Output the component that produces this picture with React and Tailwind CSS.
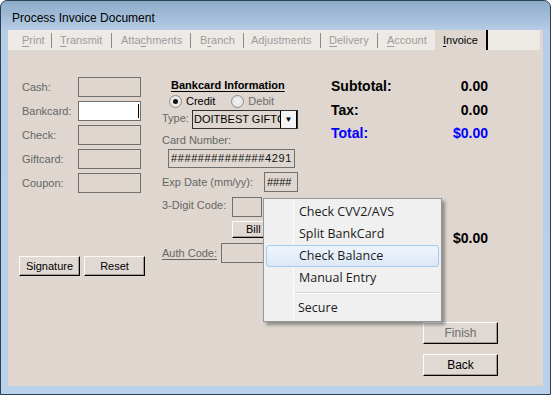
import React from "react";

const tabs = [
  { pre: "", key: "P", post: "rint", w: "w-[37px]", pl: "pl-[8px]" },
  { pre: "", key: "T", post: "ransmit", w: "w-[59px]", pl: "pl-[8px]" },
  { pre: "Atta", key: "c", post: "hments", w: "w-[78px]", pl: "pl-[9px]" },
  { pre: "B", key: "r", post: "anch", w: "w-[52px]", pl: "pl-[9px]" },
  { pre: "Ad", key: "j", post: "ustments", w: "w-[76px]", pl: "pl-[7px]" },
  { pre: "", key: "D", post: "elivery", w: "w-[56px]", pl: "pl-[8px]" },
  { pre: "", key: "A", post: "ccount", w: "w-[57px]", pl: "pl-[9px]" },
];

const payRows = ["Cash:", "Bankcard:", "Check:", "Giftcard:", "Coupon:"];

const menuItems = [
  { label: "Check CVV2/AVS" },
  { label: "Split BankCard" },
  { label: "Check Balance", hot: true },
  { label: "Manual Entry" },
];

// classic 3d winforms button
const Btn = ({ children, className = "", disabled }) => (
  <button
    className={
      "flex items-center justify-center bg-[#e0d9d3] border border-t-[#fbfaf9] border-l-[#fbfaf9] border-r-black border-b-black shadow-[inset_-1px_-1px_0_#a39c95] " +
      (disabled ? "text-[#6d6d6d] " : "text-black ") +
      className
    }
  >
    {children}
  </button>
);

const Box = ({ className = "", children }) => (
  <div className={"border border-[#707070] bg-[#ded6cf] overflow-hidden whitespace-nowrap " + className}>
    {children}
  </div>
);

const Radio = ({ checked, label, disabled }) => (
  <div className="flex items-center">
    <span className="w-[13px] h-[13px] rounded-full border border-[#8e8f8f] bg-[radial-gradient(circle,#f4f4f4_0%,#dcdcdc_100%)] flex items-center justify-center">
      {checked && <span className="w-[5px] h-[5px] rounded-full bg-[#111]" />}
    </span>
    <span className={"ml-[4px] " + (disabled ? "text-[#6d6d6d]" : "text-black")}>{label}</span>
  </div>
);

export default function App() {
  return (
    <div className="w-[551px] h-[395px] flex flex-col rounded-t-[7px] border border-[#2c4054] bg-[linear-gradient(to_bottom,#8eabca_0px,#b6cde6_30px,#b9d1ea_100%)] overflow-hidden font-['Liberation_Sans',Arial,sans-serif] text-[11px]">
      {/* title bar */}
      <div className="h-[29px] pl-[11px] pt-[5px] flex items-center text-[12px] text-black shrink-0">
        Process Invoice Document
      </div>

      {/* client area */}
      <div className="mx-[7px] mb-[8px] flex-1 flex flex-col bg-[#ded6cf]">
        {/* tab strip */}
        <div className="h-[20px] mr-[3px] bg-[#ede9e5] flex items-center pl-[6px] shrink-0">
          {tabs.map((t, i) => (
            <React.Fragment key={i}>
              <span className={t.w + " " + t.pl + " text-[#9d9d9d] whitespace-nowrap"}>
                {t.pre}
                <span className="underline underline-offset-[2px]">{t.key}</span>
                {t.post}
              </span>
              {i < tabs.length - 1 && <span className="w-px h-[15px] bg-[#8a8a8a]" />}
            </React.Fragment>
          ))}
          <span className="w-[53px] h-full pl-[8px] bg-[#ded6cf] border-r-2 border-black flex items-center text-black">
            <span className="underline underline-offset-[2px]">I</span>nvoice
          </span>
        </div>

        {/* form body */}
        <div className="relative flex-1 flex">
          {/* payment column */}
          <div className="ml-[11px] w-[127px] pt-[27px] flex flex-col gap-[4px]">
            {payRows.map((r, i) => (
              <div key={r} className="flex items-center h-[20px]">
                <span className="ml-[3px] w-[56px] text-[#666]">{r}</span>
                {i === 1 ? (
                  <div className="w-[63px] h-[20px] border border-[#707070] bg-white relative">
                    <span className="absolute right-[1px] top-[2px] w-px h-[14px] bg-black" />
                  </div>
                ) : (
                  <Box className="w-[63px] h-[20px]" />
                )}
              </div>
            ))}
            <div className="flex gap-[4px] mt-[59px]">
              <Btn className="w-[61px] h-[20px]">Signature</Btn>
              <Btn className="w-[61px] h-[20px]">Reset</Btn>
            </div>
          </div>

          {/* bankcard column */}
          <div className="ml-[16px] w-[136px] pt-[27px] flex flex-col">
            <div className="h-[14px] pl-[9px] font-bold underline underline-offset-[2px] text-black whitespace-nowrap">
              Bankcard Information
            </div>
            <div className="h-[14px] mt-[3px] pl-[7px] flex items-center gap-[16px]">
              <Radio checked label="Credit" />
              <Radio disabled label="Debit" />
            </div>
            <div className="h-[19px] mt-[2px] flex items-center">
              <span className="w-[30px] text-[#666] -mt-[3px]">Type:</span>
              <div className="flex-1 h-[19px] border border-[#303030] flex items-center overflow-hidden">
                <span className="w-[88px] pl-[1px] text-black whitespace-nowrap overflow-hidden">DOITBEST GIFTC</span>
                <span className="w-[17px] h-full border-l border-r border-black bg-[#f4f4f4] flex items-center justify-center text-[8px] text-black">
                  ▼
                </span>
              </div>
            </div>
            <div className="h-[14px] mt-[4px] text-[#666] flex items-center">Card Number:</div>
            <Box className="mt-[2px] ml-[6px] w-[127px] h-[19px] flex items-center pl-[2px] text-[#111] tracking-[0.6px]">
              ##############4291
            </Box>
            <div className="h-[20px] mt-[4px] flex items-center justify-between">
              <span className="text-[#666]">Exp Date (mm/yy):</span>
              <Box className="w-[34px] h-[20px] flex items-center pl-[2px] text-[#111]">####</Box>
            </div>
            <div className="h-[20px] mt-[5px] flex items-center">
              <span className="w-[70px] text-[#666] -mt-[3px]">3-Digit Code:</span>
              <Box className="w-[30px] h-[20px]" />
            </div>
            <div className="h-[17px] mt-[4px] pl-[70px] flex">
              <Btn className="w-[60px] h-[17px] !justify-start pl-[13px]">Bill</Btn>
            </div>
            <div className="h-[20px] mt-[5px] flex items-center">
              <span className="w-[59px] text-[#666] underline underline-offset-[2px]">Auth Code:</span>
              <Box className="w-[77px] h-[20px]" />
            </div>
          </div>

          {/* totals column */}
          <div className="ml-[33px] w-[167px] pt-[28px] flex flex-col font-bold text-[14px] leading-[16px]">
            <div className="w-[157px] flex justify-between text-black">
              <span>Subtotal:</span>
              <span>0.00</span>
            </div>
            <div className="w-[157px] mt-[8px] flex justify-between text-black">
              <span>Tax:</span>
              <span>0.00</span>
            </div>
            <div className="w-[157px] mt-[7px] flex justify-between text-[#0000ff]">
              <span>Total:</span>
              <span>$0.00</span>
            </div>
            <div className="w-[157px] mt-[89px] flex justify-end text-black">
              <span>$0.00</span>
            </div>
            <Btn disabled className="self-end w-[75px] h-[22px] mt-[76px] font-normal text-[12px]">
              Finish
            </Btn>
            <Btn className="self-end w-[75px] h-[22px] mt-[10px] font-normal text-[12px]">Back</Btn>
          </div>

          {/* context menu */}
          <div className="absolute left-[255px] top-[148px] w-[179px] h-[124px] bg-[#f0f0f0] border border-[#979797] shadow-[3px_3px_3px_rgba(0,0,0,0.35)] py-[2px] font-['Open_Sans','Noto_Sans',sans-serif] text-[12.5px] text-[#1b1b1b]">
            <span className="absolute left-[29px] top-[2px] bottom-[2px] w-px bg-[#e2e3e3] border-r border-white" />
            {menuItems.map((m) => (
              <div
                key={m.label}
                className={
                  "relative h-[22px] mx-[2px] flex items-center pl-[32px] " +
                  (m.hot
                    ? "rounded-[3px] border border-[#a9c9ef] bg-[linear-gradient(to_bottom,#eef4fc,#dde8f6)]"
                    : "border border-transparent")
                }
              >
                {m.label}
              </div>
            ))}
            <div className="relative ml-[31px] mr-[2px] my-[3px] h-[2px] border-t border-[#d7d7d7] border-b border-b-white" />
            <div className="relative h-[22px] mx-[2px] flex items-center pl-[32px]">Secure</div>
          </div>
        </div>
      </div>
    </div>
  );
}
